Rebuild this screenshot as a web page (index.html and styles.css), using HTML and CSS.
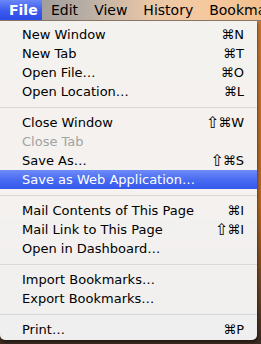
FILE: index.html
```html
<!DOCTYPE html>
<html>
<head>
<meta charset="utf-8">
<link rel="stylesheet" href="styles.css">
</head>
<body>
<div class="screen">
  <div class="menubar">
    <span class="mb-item active">File</span>
    <span class="mb-item edit">Edit</span>
    <span class="mb-item">View</span>
    <span class="mb-item">History</span>
    <span class="mb-item">Bookmarks</span>
  </div>
  <div class="menu">
    <div class="row"><span>New Window</span><span class="key">⌘N</span></div>
    <div class="row"><span>New Tab</span><span class="key">⌘T</span></div>
    <div class="row"><span>Open File…</span><span class="key">⌘O</span></div>
    <div class="row"><span>Open Location…</span><span class="key">⌘L</span></div>
    <div class="sep"></div>
    <div class="row"><span>Close Window</span><span class="key"><span class="shift">⇧</span>⌘W</span></div>
    <div class="row disabled"><span>Close Tab</span></div>
    <div class="row"><span>Save As…</span><span class="key"><span class="shift">⇧</span>⌘S</span></div>
    <div class="row selected"><span>Save as Web Application…</span></div>
    <div class="sep"></div>
    <div class="row"><span>Mail Contents of This Page</span><span class="key">⌘I</span></div>
    <div class="row"><span>Mail Link to This Page</span><span class="key"><span class="shift">⇧</span>⌘I</span></div>
    <div class="row"><span>Open in Dashboard…</span></div>
    <div class="sep"></div>
    <div class="row"><span>Import Bookmarks…</span></div>
    <div class="row"><span>Export Bookmarks…</span></div>
    <div class="sep"></div>
    <div class="row"><span>Print…</span><span class="key">⌘P</span></div>
  </div>
</div>
</body>
</html>
```
FILE: styles.css
```css
* { box-sizing: border-box; }
html, body { margin: 0; padding: 0; }
body {
  width: 261px;
  height: 344px;
  overflow: hidden;
  background: linear-gradient(180deg, #c77a33 0%, #b5651f 60%, #3a2a20 100%);
  font-family: "DejaVu Sans", "Liberation Sans", sans-serif;
  font-size: 13px;
  color: #000;
}
.screen { width: 261px; height: 344px; display: flex; flex-direction: column; }
.menubar {
  height: 21px;
  flex-shrink: 0;
  display: flex;
  align-items: center;
  white-space: nowrap;
  overflow: hidden;
  background: linear-gradient(90deg, #8f8f8f 0px, #b4aca4 80px, #e9c6a6 150px, #f5c9a0 200px, #f3c08e 261px);
  border-bottom: 1px solid #8a7868;
  font-size: 14px;
}
.mb-item { flex-shrink: 0; padding: 0 8px; height: 21px; line-height: 20px; }
.mb-item.active {
  width: 42px;
  padding: 0 0 0 9px;
  color: #fff;
  font-weight: bold;
  background: linear-gradient(180deg, #6a86f7 0%, #3c5cf0 50%, #2a48e6 100%);
}
.mb-item.edit { padding-left: 9px; }
.menu {
  width: 257px;
  flex: 1;
  margin-bottom: 4px;
  padding-top: 4px;
  background: rgba(246, 246, 246, 0.97);
  border-radius: 0 0 5px 5px;
  box-shadow: 1px 2px 3px rgba(0,0,0,0.45);
}
.row {
  height: 19px;
  display: flex;
  justify-content: space-between;
  align-items: center;
  padding: 0 13px 0 22px;
  white-space: nowrap;
}
.row.disabled { color: #a2a2a2; }
.row.selected {
  color: #fff;
  background: linear-gradient(180deg, #6e8cf6 0%, #4a6cf2 50%, #3358ec 100%);
}
.key { display: flex; align-items: center; }
.shift { font-size: 16px; line-height: 14px; margin-right: -1px; }
.sep { height: 12px; display: flex; align-items: center; }
.sep::before { content: ""; display: block; width: 100%; height: 1px; background: #d9d9d9; }
```
